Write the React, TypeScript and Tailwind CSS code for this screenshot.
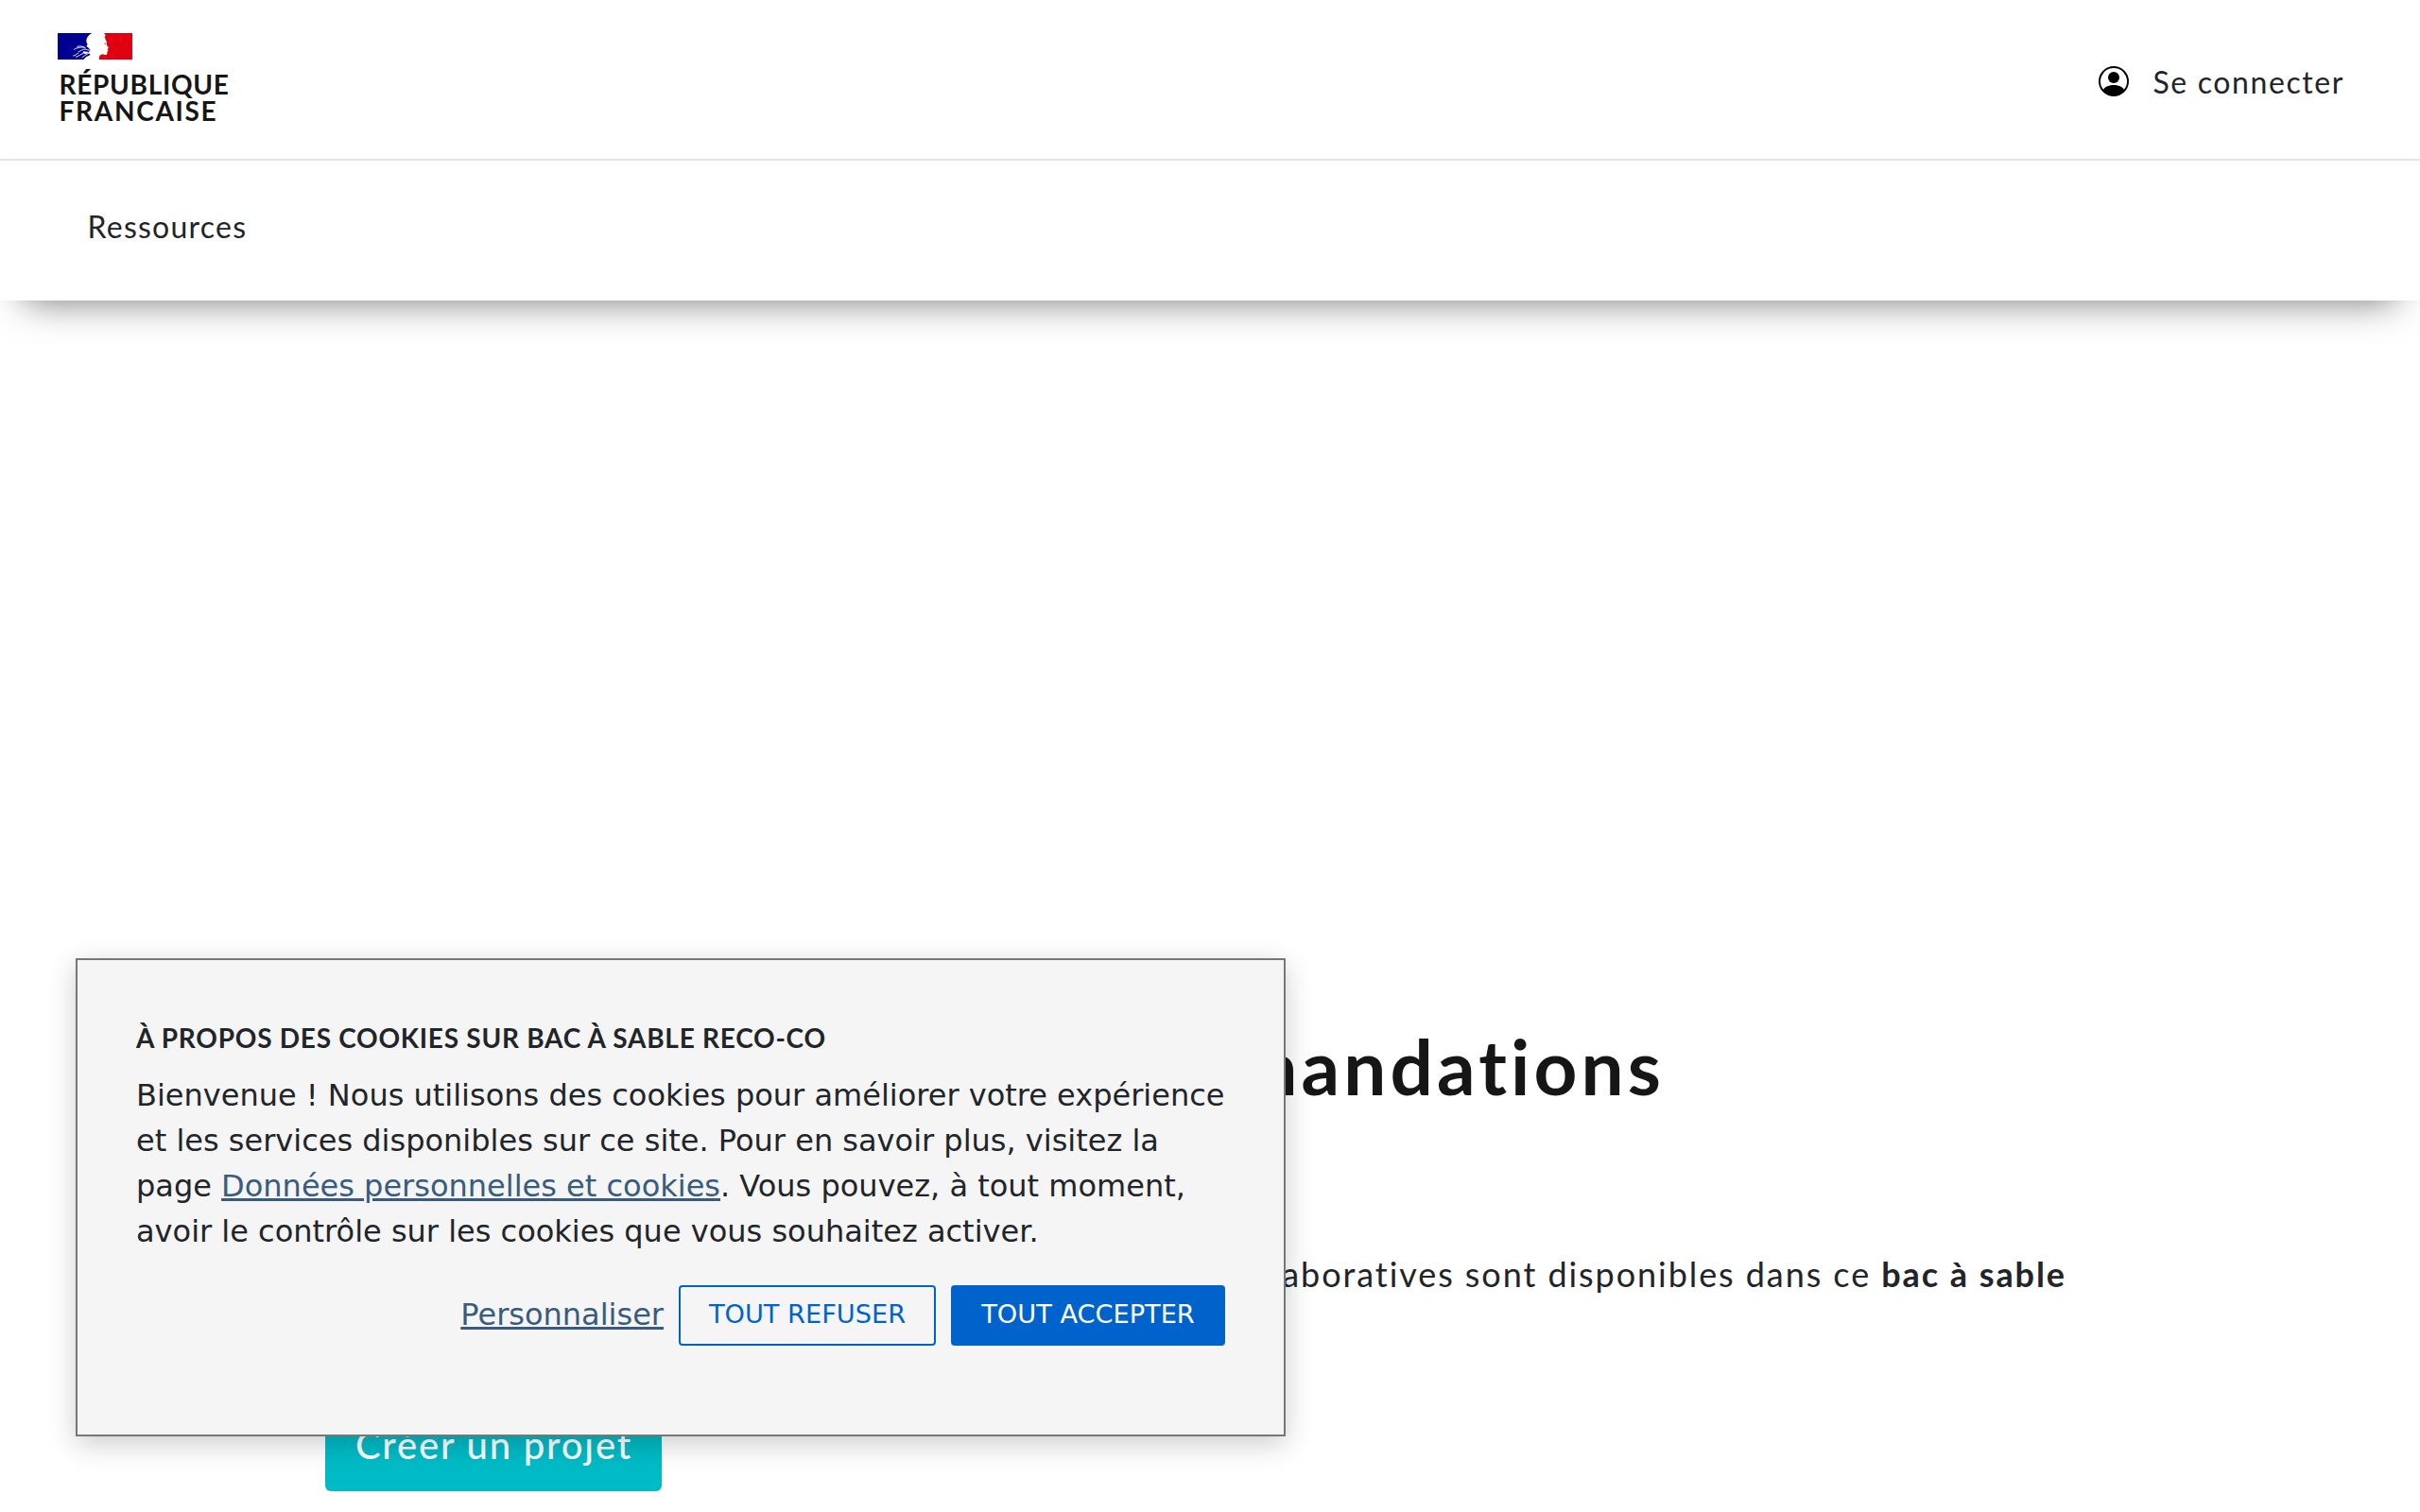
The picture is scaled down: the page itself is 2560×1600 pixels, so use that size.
import React from "react";
import { BsPersonCircle } from "react-icons/bs";

function Flag() {
  return (
    <svg width="79" height="28" viewBox="0 0 237 84" aria-hidden="true" className="block">
      <path fill="#000091" d="M0 0H109C100 4 94 11 92 19C90 25 91 31 95 36L91 42L97 46L104 54L97 62L104 69L90 76L82 84H0Z" />
      <path fill="#e1000f" d="M147 0H237V84H131L133 71L142 67L152 70C158 69 158 64 157 60L160 56L158 51L162 47L155 37C157 31 155 26 152 21L149 12L152 7Z" />
      <g fill="none" stroke="#fff" strokeWidth="2.6" strokeLinecap="round">
        <path d="M52 52C61 47 70 44 84 45" />
        <path d="M62 43C69 40 77 41 88 47" />
        <path d="M66 60C73 57 79 51 87 51C93 52 97 55 102 55" />
        <path d="M50 72C57 72 59 66 65 64" />
        <path d="M58 76C67 74 72 67 80 65" />
        <path d="M78 77C84 72 91 68 98 64" />
      </g>
      <path fill="#fff" d="M82 58L98 60L91 67L79 64Z" />
      <path fill="#8a7a78" d="M147 35L151 31L154 33L151 37Z" />
    </svg>
  );
}

function Header() {
  return (
    <header className="relative bg-white">
      <div className="flex h-[168px] items-start justify-between pl-[61px] pr-[80px]">
        <a className="flex flex-col pt-[35px] text-[28px] font-bold leading-[28px] text-[#161616]">
          <Flag />
          <span className="mt-[12px] pl-[1.5px] tracking-[0.7px]">RÉPUBLIQUE</span>
          <span className="pl-[1.5px] tracking-[1.7px]">FRANCAISE</span>
        </a>
        <a className="flex items-center gap-[25.5px] pt-[62px] text-[32px] leading-[48px] tracking-[1.6px] text-[#212529]">
          <BsPersonCircle className="size-8 text-black" />
          <span className="relative top-px">Se connecter</span>
        </a>
      </div>
      <nav className="relative flex h-[150px] items-center border-t-2 border-[#e5e5e5] bg-white pb-[8px] pl-[92.5px] shadow-[0_28px_38px_-26px_rgba(0,0,0,0.5),0_0_20px_rgba(0,0,0,0.02)]">
        <a className="text-[32px] leading-[48px] tracking-[1.25px] text-[#212529]">Ressources</a>
      </nav>
    </header>
  );
}

function Hero() {
  return (
    <main className="pl-[344px] pt-[762px] text-[#212529]">
      <h1 className="w-[1417px] whitespace-nowrap text-right text-[80px] font-bold leading-[96px] tracking-[4.1px] text-[#161616]">
        recommandations
      </h1>
      <p className="mt-[145px] w-[1842px] whitespace-nowrap text-right text-[36px] leading-[54px] tracking-[1.93px]">
        collaboratives sont disponibles dans ce <strong className="font-bold">bac à sable</strong>
      </p>
      <a className="mt-[105px] flex h-[98px] w-[356px] items-center whitespace-nowrap rounded-md bg-[#00bbc6] pl-[32px] text-[40px] font-medium leading-[60px] tracking-[1.8px] text-white">
        Créer un projet
      </a>
    </main>
  );
}

function CookieDialog() {
  return (
    <section
      role="dialog"
      className="absolute left-[80px] top-[1014px] h-[506px] w-[1280px] border-2 border-[#777] bg-[#f5f5f5] px-[62px] pt-[61px] text-[#212529] shadow-[0_8px_28px_rgba(0,0,0,0.2)]"
    >
      <h2 className="whitespace-nowrap text-[28px] font-bold leading-[42px] tracking-[0.74px]">
        À PROPOS DES COOKIES SUR BAC À SABLE RECO-CO
      </h2>
      <p className="mt-[16px] whitespace-nowrap font-['DejaVu_Sans',sans-serif] text-[32px] leading-[48px]">
        Bienvenue ! Nous utilisons des cookies pour améliorer votre expérience
        <br />
        et les services disponibles sur ce site. Pour en savoir plus, visitez la
        <br />
        page <a className="text-[#385b80] underline">Données personnelles et cookies</a>. Vous pouvez, à tout moment,
        <br />
        avoir le contrôle sur les cookies que vous souhaitez activer.
      </p>
      <div className="mt-[33px] flex h-16 items-center justify-end gap-4 font-['DejaVu_Sans',sans-serif] text-[27.2px]">
        <a className="pb-[2px] text-[32px] leading-[48px] text-[#385b80] underline">Personnaliser</a>
        <button className="h-16 w-[272px] rounded-[4px] border-2 border-[#0063cb] pb-[2px] text-[#0063cb]">
          TOUT REFUSER
        </button>
        <button className="h-16 w-[290px] rounded-[4px] bg-[#0063cb] pb-[2px] text-white">TOUT ACCEPTER</button>
      </div>
    </section>
  );
}

export default function App() {
  return (
    <div className="relative h-[1600px] w-[2560px] overflow-hidden bg-white font-[Lato,sans-serif]">
      <Header />
      <Hero />
      <CookieDialog />
    </div>
  );
}
